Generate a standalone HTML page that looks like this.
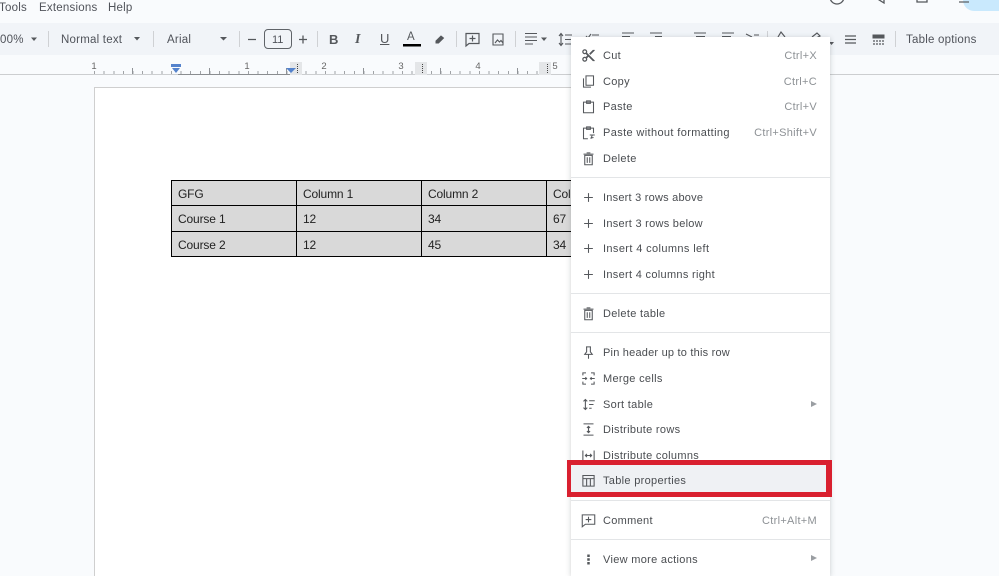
<!DOCTYPE html>
<html style="height:576px;overflow:hidden"><head><meta charset="utf-8"><style>
html,body{margin:0;padding:0}
body{width:999px;height:576px;overflow:hidden;background:#f9fbfd;font-family:"Liberation Sans",sans-serif;color:#444746}
#w{position:relative;width:999px;height:576px;overflow:hidden;background:#f9fbfd;filter:blur(.3px)}
.a{position:absolute;white-space:nowrap}
.t{font-size:11.5px;line-height:14px;letter-spacing:.22px;color:#50535a}
.sep{position:absolute;width:1px;height:16px;top:31px;background:#cfd1d4}
svg{position:absolute;overflow:visible}
.tick{position:absolute;left:94px;width:462px;top:71px;height:3px;background:repeating-linear-gradient(90deg,#a0a3a6 0 1px,transparent 1px 9.625px)}
.tick2{position:absolute;left:94px;width:462px;top:68px;height:6px;background:repeating-linear-gradient(90deg,transparent 0 38px,#8f9296 38px 39px,transparent 39px 77px)}
.rn{position:absolute;top:61px;font-size:9.5px;line-height:11px;color:#666;transform:translateX(-50%)}
td{border:1px solid #000;background:#d9d9d9;padding:0 0 0 6px;height:24.5px;font-size:12px;line-height:14px;color:#222;box-sizing:border-box;letter-spacing:-.15px}
.p1 td{padding-top:2px}
#m{position:absolute;left:571px;top:37px;width:259px;height:539px;background:#fff;box-shadow:0 1px 5px rgba(60,64,67,.25);overflow:hidden}
.r{position:absolute;left:32px;margin-top:1px;font-size:11px;line-height:14px;letter-spacing:.31px;color:#4a4d51;white-space:nowrap}
.k{position:absolute;right:13px;margin-top:1px;font-size:11px;line-height:14px;letter-spacing:.3px;color:#8d9195;white-space:nowrap}
.h{position:absolute;left:0;width:259px;height:1px;background:#e3e5e7}
.ar{position:absolute;left:240px;width:0;height:0;border-left:6px solid #9a9ea2;border-top:3px solid transparent;border-bottom:3px solid transparent}
#m svg{left:10px;width:15px;height:15px;margin-top:1px;fill:none;stroke:#55585c;stroke-width:1.7}
.f{fill:#55585c!important;stroke:none!important}
</style></head><body><div id="w">
<div class="a" style="left:0;top:23px;width:999px;height:32px;background:#f1f4f8"></div>
<div class="a t" style="left:-1px;top:1px">Tools</div>
<div class="a t" style="left:39px;top:1px">Extensions</div>
<div class="a t" style="left:108px;top:1px">Help</div>

<div class="a" style="left:963px;top:0;width:36px;height:11px;border-radius:0 0 0 12px;background:#c9e9fd"></div>
<svg style="left:0;top:0;overflow:hidden" width="999" height="76" fill="none" stroke="#55585c" stroke-width="1.3">
<path d="M830 -3a7 7 0 0 0 14 0M876 -2l8 5v-5M917 -2v4h10v-4"/>
<path d="M959 2h10" stroke-width="1.200"/>
<path d="M31 37.500h6l-3 3.500zM134 37h6l-3 3.500zM220 37h7l-3.500 3.500z" fill="#55585c" stroke="none"/>
<path d="M248 39.500h8M299 39.500h8M303 35.500v8"/>
<rect x="264.500" y="29.500" width="27" height="19" rx="3.500" stroke="#5f6368" stroke-width="1"/>
<rect x="403" y="44" width="18" height="2.500" fill="#000" stroke="none"/>
<path d="M436 41l5-5 2.500 2-5 5h-2.500z" fill="#55585c" stroke-width="1"/>
<path d="M466 33.500h13v10h-10l-3 2.500zM472.500 35.500v6M469.500 38.500h6" stroke-width="1.200"/>
<path d="M493 34h10v11h-10zM495 43l2.500-3 2 2 1.500-1.500 2 2.500" stroke-width="1.100"/>
<path d="M525 33.500h12M525 37h12M525 40.500h12M525 44h8" stroke-width="1.100"/>
<path d="M541 37.500h6l-3 3.500z" fill="#55585c" stroke="none"/>
<path d="M561 34v11M559 36l2-2.500 2 2.500M559 43l2 2.500 2-2.500M565 35h7M565 39.500h7M565 44h7" stroke-width="1.100"/>
<path d="M586 36l2 2 3-4M592 35h7M622 33h12M622 36.500h8M650 33h12M655 36.500h7M694 33h12M696 36.500h9M722 33h12M722 36.500h9M746 34l6 3M754 35h5" stroke-width="1.100"/>
<path d="M778 37l3-5 4 5M812 37l5-4 3 3-4 2" stroke-width="1.200"/>
<path d="M829 42h5l-2.500 3z" fill="#55585c" stroke="none"/>
<path d="M845 36h11M845 39.500h11M845 43h11" stroke-width="1.300"/>
<path d="M873 35h11v3h-11z" fill="#55585c" stroke-width="1"/>
<path d="M873 41h11M873 44h11" stroke-width="1.200" stroke-dasharray="2 1"/>
</svg>
<div class="a t" style="left:0;top:33px">00%</div>
<div class="sep" style="left:48px"></div>
<div class="a t" style="left:61px;top:33px">Normal text</div>
<div class="sep" style="left:153px"></div>
<div class="a t" style="left:167px;top:33px">Arial</div>
<div class="sep" style="left:239px"></div>
<div class="a t" style="left:272px;top:33px;font-size:11px;letter-spacing:0">11</div>
<div class="sep" style="left:317px"></div>
<div class="a" style="left:329px;top:32px;font-size:13px;line-height:15px;font-weight:bold;color:#55585c">B</div>
<div class="a" style="left:355px;top:32px;font-size:14px;line-height:15px;font-style:italic;font-family:'Liberation Serif',serif;font-weight:bold;color:#55585c">I</div>
<div class="a" style="left:380px;top:31px;font-size:13px;line-height:15px;text-decoration:underline;color:#55585c">U</div>
<div class="a" style="left:407px;top:31px;font-size:11.500px;line-height:13px;color:#55585c">A</div>
<div class="sep" style="left:456px"></div>
<div class="sep" style="left:515px"></div>
<div class="sep" style="left:767px"></div>
<div class="sep" style="left:895px"></div>
<div class="a t" style="left:906px;top:33px">Table options</div>

<div class="a" style="left:0;top:74px;width:999px;height:1px;background:#ccced0"></div>
<div class="a" style="left:178px;top:74px;width:113px;height:1px;background:#8a8d90"></div>
<div class="tick"></div><div class="tick2"></div>
<div class="rn" style="left:94px">1</div>
<div class="rn" style="left:247px">1</div>
<div class="rn" style="left:324px">2</div>
<div class="rn" style="left:401px">3</div>
<div class="rn" style="left:478px">4</div>
<div class="rn" style="left:555px">5</div>
<div class="a" style="left:290px;top:62px;width:12px;height:13px;background:#e4e6e8"></div>
<div class="a" style="left:415px;top:62px;width:12px;height:13px;background:#e4e6e8"></div>
<div class="a" style="left:539px;top:62px;width:12px;height:13px;background:#e4e6e8"></div>
<div class="a" style="left:297px;top:64px;height:9px;border-left:1px dotted #444"></div>
<div class="a" style="left:422px;top:64px;height:9px;border-left:1px dotted #444"></div>
<div class="a" style="left:547px;top:64px;height:9px;border-left:1px dotted #444"></div>
<div class="a" style="left:171px;top:64px;width:10px;height:3px;background:#5583cc"></div>
<div class="a" style="left:172px;top:68px;width:0;height:0;border:4.500px solid transparent;border-top:5px solid #5583cc;border-bottom:0"></div>
<div class="a" style="left:286px;top:68px;width:0;height:0;border:5px solid transparent;border-top:5px solid #5583cc;border-bottom:0"></div>

<div class="a" style="left:94px;top:87px;width:654px;height:489px;background:#fff;border:1px solid #cfcfcf;border-bottom:0;box-sizing:border-box"></div>
<div class="a" style="left:171px;top:180px;width:400px;height:78px;overflow:hidden">
<table style="border-collapse:collapse;table-layout:fixed;width:500px;position:absolute;left:0;top:0">
<colgroup><col style="width:125px"><col style="width:125px"><col style="width:125px"><col style="width:125px"></colgroup>
<tr class="p1" style="height:25px"><td>GFG</td><td>Column 1</td><td>Column 2</td><td>Column 3</td></tr>
<tr style="height:26px"><td>Course 1</td><td>12</td><td>34</td><td>67</td></tr>
<tr class="p1" style="height:25px"><td>Course 2</td><td>12</td><td>45</td><td>34</td></tr>
</table></div>

<div id="m">
<svg style="top:10px" viewBox="0 0 24 24"><path class="f" d="M9.640 7.640c.23-.5.36-1.050.36-1.640 0-2.210-1.790-4-4-4S2 3.790 2 6s1.790 4 4 4c.59 0 1.140-.13 1.640-.36L10 12l-2.360 2.360C7.140 14.130 6.590 14 6 14c-2.210 0-4 1.790-4 4s1.790 4 4 4 4-1.790 4-4c0-.59-.13-1.140-.36-1.640L12 14l7 7h3v-1L9.640 7.640zM6 8c-1.100 0-2-.89-2-2s.9-2 2-2 2 .89 2 2-.9 2-2 2zm0 12c-1.100 0-2-.89-2-2s.9-2 2-2 2 .89 2 2-.9 2-2 2zM19 3l-6 6 2 2 7-7V3z"/></svg>
<div class="r" style="top:11px">Cut</div><div class="k" style="top:11px">Ctrl+X</div>
<svg style="top:36px" viewBox="0 0 24 24"><path d="M8 3h12v15H8zM4 7v14h12"/></svg>
<div class="r" style="top:37px">Copy</div><div class="k" style="top:37px">Ctrl+C</div>
<svg style="top:61px" viewBox="0 0 24 24"><path d="M4 5h16v17H4zM9 3h6v4H9z"/></svg>
<div class="r" style="top:62px">Paste</div><div class="k" style="top:62px">Ctrl+V</div>
<svg style="top:87px" viewBox="0 0 24 24"><path d="M11 22H4V5h16v8M9 3h6v4H9zM14 16h8M18 16l-2 6M15 21l5-1"/></svg>
<div class="r" style="top:88px;letter-spacing:.37px">Paste without formatting</div><div class="k" style="top:88px">Ctrl+Shift+V</div>
<svg style="top:113px" viewBox="0 0 24 24"><path d="M6 7h12v15H6zM4 5h16M9 3h6M10 10v9M14 10v9"/></svg>
<div class="r" style="top:114px">Delete</div>
<div class="h" style="top:140px"></div>
<svg style="top:152px" viewBox="0 0 24 24"><path d="M12 5v14M5 12h14"/></svg>
<div class="r" style="top:153px;letter-spacing:.22px">Insert 3 rows above</div>
<svg style="top:178px" viewBox="0 0 24 24"><path d="M12 5v14M5 12h14"/></svg>
<div class="r" style="top:179px;letter-spacing:.27px">Insert 3 rows below</div>
<svg style="top:203px" viewBox="0 0 24 24"><path d="M12 5v14M5 12h14"/></svg>
<div class="r" style="top:204px;letter-spacing:.38px">Insert 4 columns left</div>
<svg style="top:229px" viewBox="0 0 24 24"><path d="M12 5v14M5 12h14"/></svg>
<div class="r" style="top:230px">Insert 4 columns right</div>
<div class="h" style="top:256px"></div>
<svg style="top:268px" viewBox="0 0 24 24"><path d="M6 7h12v15H6zM4 5h16M9 3h6M10 10v9M14 10v9"/></svg>
<div class="r" style="top:269px">Delete table</div>
<div class="h" style="top:295px"></div>
<svg style="top:307px" viewBox="0 0 24 24"><path d="M8 3h8M9 3v8l-3 4h12l-3-4V3M12 15v7"/></svg>
<div class="r" style="top:308px;letter-spacing:.21px">Pin header up to this row</div>
<svg style="top:333px" viewBox="0 0 24 24"><path d="M8 3H3v4M16 3h5v4M3 17v4h5M21 17v4h-5M2 12h7M7 10l2 2-2 2M22 12h-7M17 10l-2 2 2 2"/></svg>
<div class="r" style="top:334px">Merge cells</div>
<svg style="top:359px" viewBox="0 0 24 24"><path d="M7 4v16M4 7l3-3 3 3M4 17l3 3 3-3M13 6h9M13 12h7M13 18h4"/></svg>
<div class="r" style="top:360px">Sort table</div><div class="ar" style="top:364px"></div>
<svg style="top:384px" viewBox="0 0 24 24"><path d="M4 3h16M4 21h16M12 7v10M9.500 9.500L12 7l2.500 2.500M9.500 14.500L12 17l2.500-2.500"/></svg>
<div class="r" style="top:385px">Distribute rows</div>
<svg style="top:410px" viewBox="0 0 24 24"><path d="M3 4v16M21 4v16M7 12h10M9.500 9.500L7 12l2.500 2.500M14.500 9.500L17 12l-2.500 2.500"/></svg>
<div class="r" style="top:411px">Distribute columns</div>
<div class="a" style="left:0;top:428px;width:259px;height:27px;background:#eff1f4"></div>
<svg style="top:435px" viewBox="0 0 24 24"><path d="M3 4h18v17H3zM3 9h18M9 9v12M15 9v12"/></svg>
<div class="r" style="top:436px">Table properties</div>
<div class="h" style="top:463px"></div>
<svg style="top:475px" viewBox="0 0 24 24"><path d="M2 3h20v15H7l-5 4zM12 6v9M7.500 10.500h9"/></svg>
<div class="r" style="top:476px">Comment</div><div class="k" style="top:476px">Ctrl+Alt+M</div>
<div class="h" style="top:502px"></div>
<svg style="top:514px" viewBox="0 0 24 24"><path class="f" d="M10 4h4v4h-4zM10 10h4v4h-4zM10 16h4v4h-4z"/></svg>
<div class="r" style="top:515px">View more actions</div><div class="ar" style="top:518px"></div>
</div>
<div class="a" style="left:567px;top:460px;width:265px;height:37px;box-sizing:border-box;border:5px solid #d9202f;border-left-width:4px;border-right-width:6px"></div>
</div></body></html>
